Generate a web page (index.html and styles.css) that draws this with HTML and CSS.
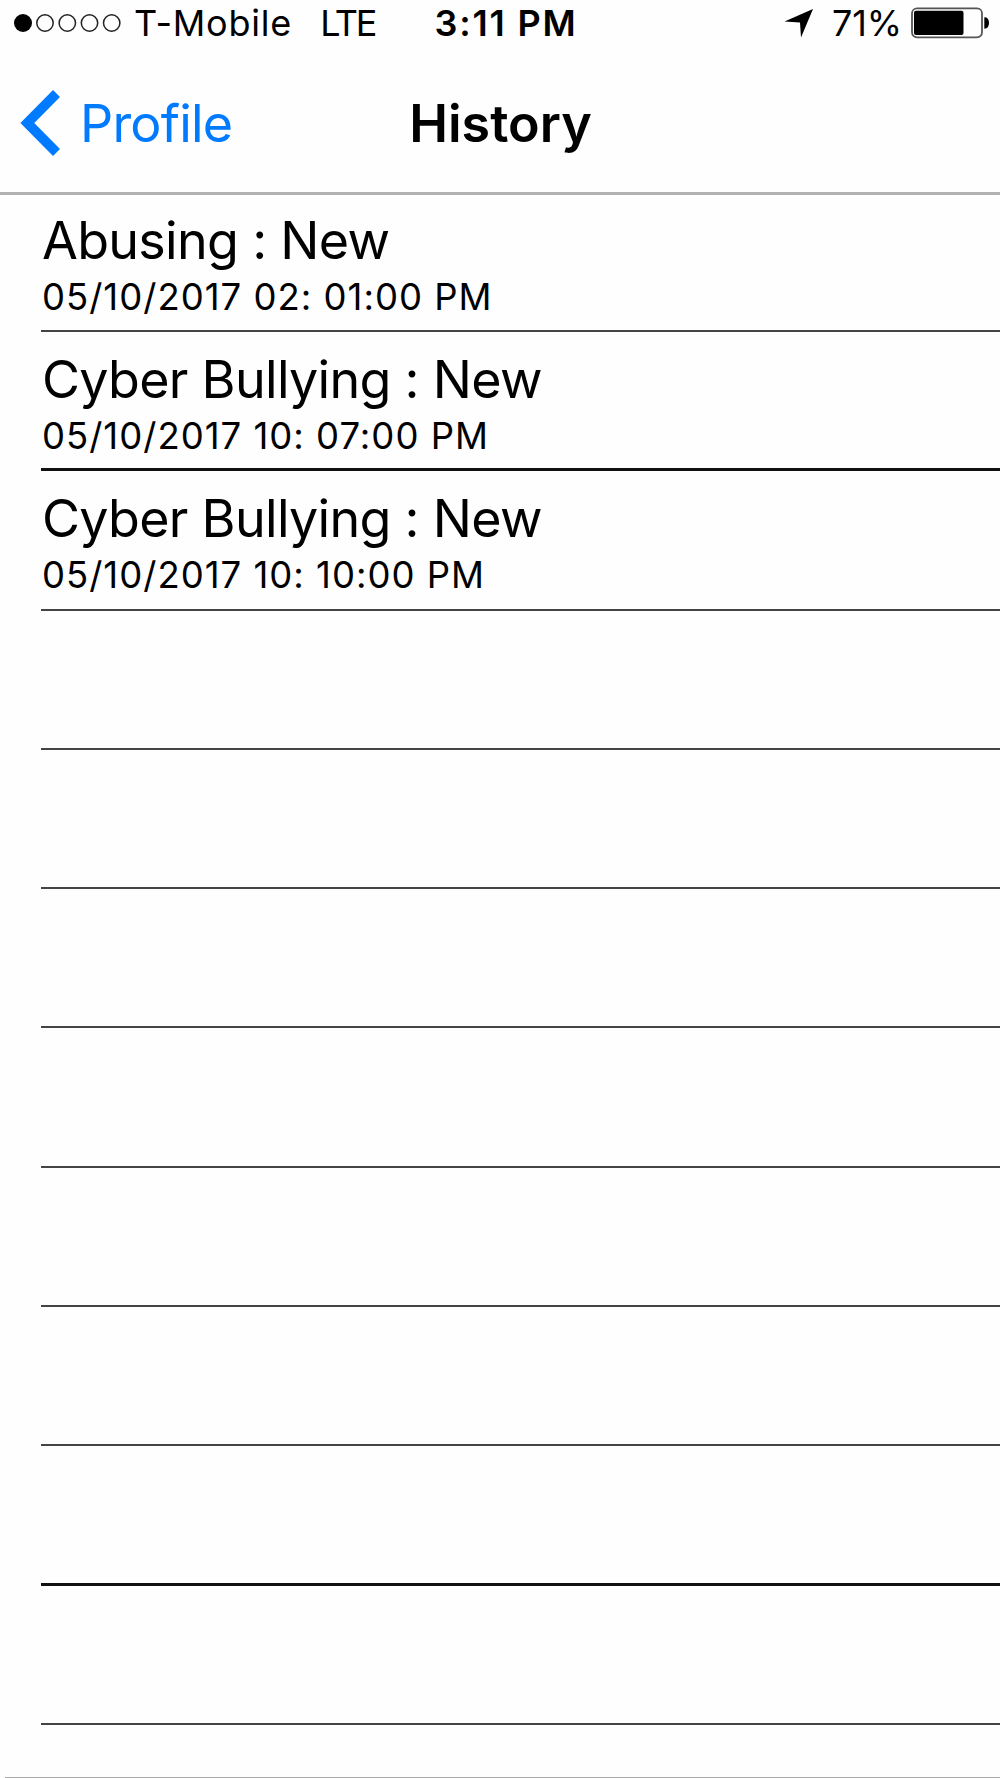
FILE: index.html
```html
<!DOCTYPE html>
<html lang="en">
<head>
    <meta charset="UTF-8">
    <meta name="viewport" content="width=device-width, initial-scale=1.0">
    <title>History</title>
    <link rel="stylesheet" href="styles.css">
</head>
<body>
    <div class="status-bar">
        <div class="status-left">
            <svg class="signal" width="108" height="20" viewBox="0 0 108 20">
                <circle cx="9" cy="10" r="9" />
                <g fill="none" stroke="#222" stroke-width="1.5">
                    <circle cx="31" cy="10" r="8.2" />
                    <circle cx="53.3" cy="10" r="8.2" />
                    <circle cx="75.5" cy="10" r="8.2" />
                    <circle cx="97.7" cy="10" r="8.2" />
                </g>
            </svg>
            <span class="carrier">T-Mobile</span>
            <span class="network">LTE</span>
        </div>
        <div class="time">3:11 PM</div>
        <div class="status-right">
            <svg class="location" width="30" height="30" viewBox="0 0 30 30">
                <path d="M29 1 L17 29.5 L16 14.5 L0.5 13.5 Z" />
            </svg>
            <span class="percent">71%</span>
            <svg class="battery" width="79" height="32" viewBox="0 0 79 32">
                <rect x="2" y="1.3" width="70" height="29" rx="5" fill="none" stroke="#555" stroke-width="1.8" />
                <rect x="4" y="3.7" width="49.5" height="24.2" rx="2" />
                <path d="M74.3 10.3 Q79 10.3 79 16 Q79 21.7 74.3 21.7 Z" />
            </svg>
        </div>
    </div>

    <div class="nav-bar">
        <a class="back">
            <svg width="42" height="68" viewBox="0 0 42 68">
                <path d="M36.5 4.5 L7.3 34 L36.5 63.5" fill="none" stroke="#007aff" stroke-width="9.8" />
            </svg>
            <span>Profile</span>
        </a>
        <h1>History</h1>
        <div></div>
    </div>

    <ul class="history">
        <li>
            <div class="title">Abusing : New</div>
            <div class="date">05/10/2017 02: 01:00 PM</div>
        </li>
        <li class="thick">
            <div class="title">Cyber Bullying : New</div>
            <div class="date">05/10/2017 10: 07:00 PM</div>
        </li>
        <li>
            <div class="title">Cyber Bullying : New</div>
            <div class="date">05/10/2017 10: 10:00 PM</div>
        </li>
        <li></li>
        <li></li>
        <li></li>
        <li></li>
        <li></li>
        <li></li>
        <li class="thick"></li>
        <li></li>
    </ul>
    <div class="bottom-line"></div>
</body>
</html>
```

FILE: styles.css
```css
* {
    box-sizing: border-box;
}
body {
    margin: 0;
    height: 1778px;
    display: flex;
    flex-direction: column;
    overflow: hidden;
    background: #fefefe;
    color: #000;
    font-family: Inter, "Liberation Sans", sans-serif;
}
.status-bar {
    display: grid;
    grid-template-columns: 1fr auto 1fr;
    align-items: center;
    height: 46px;
    padding: 0 11px 0 14px;
    font-size: 36px;
    line-height: 46px;
}
.status-left, .status-right {
    display: flex;
    align-items: center;
}
.status-right {
    justify-content: flex-end;
}
.carrier {
    margin-left: 12px;
    letter-spacing: 0.8px;
}
.network {
    margin-left: 28px;
    letter-spacing: -2.2px;
}
.time {
    padding-left: 9px;
    font-weight: 600;
    letter-spacing: 1.8px;
}
.percent {
    margin: 0 8px 0 18px;
    letter-spacing: -0.1px;
}
/* navigation bar */
.nav-bar {
    display: grid;
    grid-template-columns: 1fr auto 1fr;
    align-items: center;
    height: 149px;
    padding: 21px 0 13px;
    border-bottom: 3px solid #b2b2b2;
}
.back {
    display: flex;
    align-items: center;
    padding-left: 20px;
    color: #007aff;
    font-size: 52px;
    letter-spacing: -0.8px;
}
.back span {
    margin-left: 18px;
}
.nav-bar h1 {
    margin: 0;
    padding-left: 1px;
    font-size: 52px;
    font-weight: 600;
}
/* list of reports */
.history {
    flex: none;
    margin: 0;
    padding: 0 0 0 41px;
    list-style: none;
}
.history li {
    height: 139.3px;
    padding-top: 16px;
    border-bottom: 2px solid #444;
}
.history li:first-child {
    height: 137px;
    padding-top: 14px;
}
.history .thick {
    border-bottom: 3px solid #111;
}
.title {
    padding-left: 1px;
    font-size: 52px;
    line-height: 64px;
    letter-spacing: -0.7px;
    /* keeps the colon on the baseline */
    font-feature-settings: "calt" 0;
    white-space: nowrap;
}
.date {
    padding-left: 1px;
    font-size: 36.5px;
    line-height: 49px;
    letter-spacing: 1px;
    white-space: nowrap;
}
.bottom-line {
    height: 1px;
    margin: auto 0 0 5px;
    background: #aaa;
}
```
